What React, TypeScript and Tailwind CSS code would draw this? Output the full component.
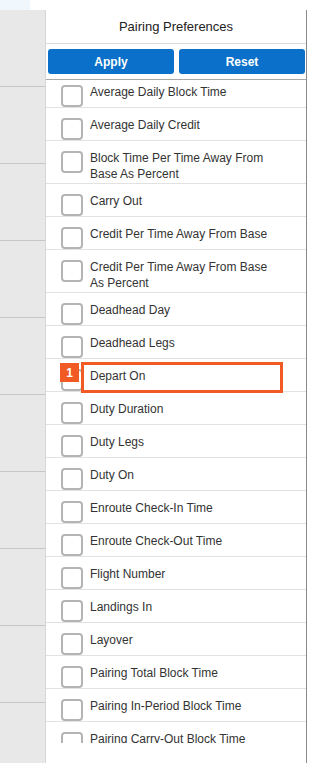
import React from 'react';

const prefs = [
  'Average Daily Block Time',
  'Average Daily Credit',
  'Block Time Per Time Away From Base As Percent',
  'Carry Out',
  'Credit Per Time Away From Base',
  'Credit Per Time Away From Base As Percent',
  'Deadhead Day',
  'Deadhead Legs',
  'Depart On',
  'Duty Duration',
  'Duty Legs',
  'Duty On',
  'Enroute Check-In Time',
  'Enroute Check-Out Time',
  'Flight Number',
  'Landings In',
  'Layover',
  'Pairing Total Block Time',
  'Pairing In-Period Block Time',
  'Pairing Carry-Out Block Time',
];

export default function App() {
  return (
    <div className="h-[763px] w-[310px] overflow-hidden bg-white font-['Liberation_Sans',Arial,sans-serif] text-[#333]">
      {/* top strip */}
      <div className="flex h-[10px]">
        <div className="w-[30px] bg-[#f0f7fd]" />
      </div>

      <div className="flex h-[753px]">
        {/* left rail */}
        <div className="w-[45px] shrink-0 bg-[#e8e8e8]">
          {Array.from({ length: 9 }).map((_, i) => (
            <div key={i} className="h-[77px] border-b border-[#c6c6c6]" />
          ))}
        </div>

        {/* panel */}
        <div className="flex w-[262px] shrink-0 flex-col border-l border-r border-l-[#d6d6d6] border-r-[#8a8a8a] bg-white">
          <div className="flex h-[34px] shrink-0 items-center justify-center border-b border-[#dcdcdc] text-[13px] text-[#222]">
            Pairing Preferences
          </div>
          <div className="flex shrink-0 gap-[5px] border-b border-[#a8a8a8] pb-[5px] pl-[2px] pr-px pt-[5px]">
            <PanelButton label="Apply" />
            <PanelButton label="Reset" />
          </div>

          {/* list, scrolled a few px */}
          <div className="h-[663px] overflow-hidden">
            <div className="-mt-[5px]">
              {prefs.map((p) => (
                <PrefRow key={p} label={p} highlight={p === 'Depart On'} />
              ))}
            </div>
          </div>
        </div>
      </div>
    </div>
  );
}

function PanelButton({ label }: { label: string }) {
  return (
    <button className="h-[25px] flex-1 rounded-[3px] bg-[#0a70c9] text-[12px] font-bold text-white">
      {label}
    </button>
  );
}

function PrefRow({ label, highlight }: { label: string; highlight?: boolean }) {
  return (
    <div className="relative flex items-start border-b border-[#e2e2e2] pl-[15px] pr-[26px] pt-[9px]">
      <div className="mt-px h-[22px] w-[22px] shrink-0 rounded-[4px] border-2 border-[#b4b4b4] bg-white" />
      <div className="pb-px pl-[7px] text-[12px] leading-4">{label}</div>
      {highlight && (
        <>
          <div className="absolute left-[14px] top-[4px] flex h-[19px] w-[19px] items-center justify-center bg-[#f25a24] text-[12px] font-bold text-white">
            1
          </div>
          <div className="absolute left-[35px] top-[3px] h-[31px] w-[202px] border-[3px] border-[#f25a24]" />
        </>
      )}
    </div>
  );
}
